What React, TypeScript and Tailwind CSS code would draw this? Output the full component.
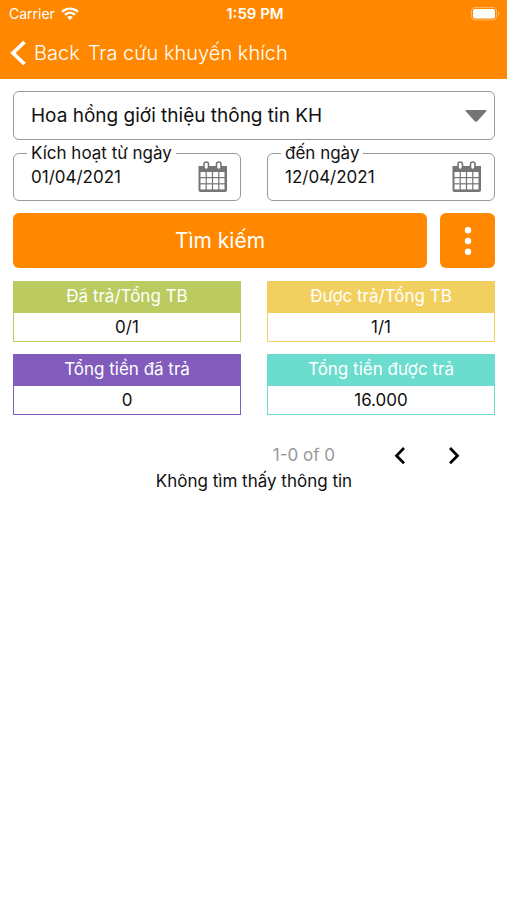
import React from "react";

const font = "font-['Inter','Liberation_Sans',sans-serif]";

const summary = [
  { title: "Đã trả/Tổng TB", value: "0/1", border: "border-[#bccb5f]", bg: "bg-[#bccb5f]" },
  { title: "Được trả/Tổng TB", value: "1/1", border: "border-[#f2d060]", bg: "bg-[#f2d060]" },
  { title: "Tổng tiền đã trả", value: "0", border: "border-[#815cbc]", bg: "bg-[#815cbc]" },
  { title: "Tổng tiền được trả", value: "16.000", border: "border-[#6bdccd]", bg: "bg-[#6bdccd]" },
];

const WifiIcon = () => (
  <svg viewBox="0 0 18 14" className="w-[18px] h-3.5" fill="#fff" aria-hidden="true">
    <path d="M9 0.4C5.6 0.4 2.5 1.7 0.2 3.9L1.9 5.7C3.8 3.9 6.3 2.8 9 2.8s5.2 1.1 7.1 2.9l1.7-1.8C15.5 1.7 12.4 0.4 9 0.4z" />
    <path d="M9 4.6c-2.2 0-4.3 0.9-5.8 2.4l1.8 1.8c1-1.1 2.5-1.7 4-1.7s3 0.6 4 1.7l1.8-1.8C13.3 5.5 11.2 4.6 9 4.6z" />
    <path d="M9 8.9c-1.1 0-2.1 0.5-2.8 1.2L9 13.2l2.8-3.1C11.1 9.4 10.1 8.9 9 8.9z" />
  </svg>
);

const BatteryIcon = () => (
  <svg viewBox="0 0 30 14" className="w-[30px] h-3.5" aria-hidden="true">
    <rect x="0.5" y="0.5" width="25" height="12.5" rx="3.5" fill="none" stroke="#fff" strokeOpacity="0.4" />
    <rect x="2" y="2" width="22" height="9.5" rx="2" fill="#fff" />
    <path d="M27 4.5c1.6 0.6 1.6 4 0 4.6z" fill="#fff" fillOpacity="0.45" />
  </svg>
);

const CalendarIcon = () => (
  <svg viewBox="0 0 30 32" className="w-[30px] h-8" aria-hidden="true">
    <path d="M0.5 5h28.500V29a2 2 0 0 1-2 2H2.500a2 2 0 0 1-2-2z" fill="#757575" />
    <g fill="#fff">
      {[11, 17.2, 23.4].map((y) =>
        [2.5, 8.8, 15.1, 21.4].map((x) => (
          <rect key={`${x}-${y}`} x={x} y={y} width="5.1" height="5" />
        ))
      )}
    </g>
    <rect x="6" y="1" width="4.5" height="7.5" rx="2.25" fill="#fff" stroke="#757575" strokeWidth="1.6" />
    <rect x="18.5" y="1" width="4.5" height="7.5" rx="2.25" fill="#fff" stroke="#757575" strokeWidth="1.6" />
  </svg>
);

const DateField = ({ id, label, date }: { id: string; label: string; date: string }) => (
  <fieldset className="min-w-0 border border-[#999] rounded-md pl-[13px] pr-3 pb-[7px]">
    <legend className="px-1 text-[17px] leading-4 whitespace-nowrap">
      <label htmlFor={id}>{label}</label>
    </legend>
    <div className="flex items-center h-8">
      <input
        id={id}
        type="text"
        defaultValue={date}
        className="flex-1 min-w-0 pl-1 text-[17px] leading-6 bg-transparent outline-none"
      />
      <button type="button" aria-label={label}>
        <CalendarIcon />
      </button>
    </div>
  </fieldset>
);

const App = () => {
  return (
    <div className={`min-h-screen bg-white text-[#111] ${font}`}>
      <header className="bg-[#ff8800] text-white">
        <div className="grid grid-cols-3 items-center h-7 pl-[9px] pr-1.5 text-sm">
          <div className="flex items-center gap-1.5">
            <span>Carrier</span>
            <WifiIcon />
          </div>
          <span className="text-center text-[15px] font-semibold">1:59 PM</span>
          <div className="flex justify-end">
            <BatteryIcon />
          </div>
        </div>
        <div className="flex items-center h-[51px] pl-2.5 pb-0.5 text-xl font-light">
          <button type="button" className="flex items-center gap-2">
            <svg viewBox="0 0 16 26" className="w-4 h-[26px]" fill="none" stroke="#fff" strokeWidth="3.8" aria-hidden="true">
              <path d="M14.5 2L3 13l11.5 11" />
            </svg>
            Back
          </button>
          <h1 className="ml-2 font-light">Tra cứu khuyến khích</h1>
        </div>
      </header>

      <main className="pl-[13px] pr-3 pt-3">
        <div className="relative">
          <select
            aria-label="Hoa hồng"
            className="appearance-none w-full h-[49px] pt-0.5 pl-[17px] pr-10 border border-[#999] rounded-md text-[19px] bg-white"
          >
            <option>Hoa hồng giới thiệu thông tin KH</option>
          </select>
          <svg viewBox="0 0 22 12" className="absolute right-2 top-[19px] w-[22px] h-3 pointer-events-none" fill="#757575" aria-hidden="true">
            <path d="M1.5 0h19c1 0 1.3 0.9 0.6 1.5L12 11.4c-0.6 0.6-1.4 0.6-2 0L0.9 1.5C0.2 0.9 0.5 0 1.5 0z" />
          </svg>
        </div>

        <div className="grid grid-cols-2 gap-[26px] mt-[5px]">
          <DateField id="from" label="Kích hoạt từ ngày" date="01/04/2021" />
          <DateField id="to" label="đến ngày" date="12/04/2021" />
        </div>

        <div className="flex gap-[13px] mt-3 text-white">
          <button type="button" className="flex-1 h-[55px] rounded-md bg-[#ff8800] text-[21px]">
            Tìm kiếm
          </button>
          <button type="button" aria-label="Menu" className="flex items-center justify-center w-[55px] h-[55px] rounded-md bg-[#ff8800]">
            <svg viewBox="0 0 8 28" className="w-2 h-7" fill="#fff" aria-hidden="true">
              <circle cx="4" cy="3.3" r="3.2" />
              <circle cx="4" cy="14" r="3.2" />
              <circle cx="4" cy="24.7" r="3.2" />
            </svg>
          </button>
        </div>

        <div className="grid grid-cols-2 gap-x-[26px] gap-y-3 mt-[13px] text-[17px] text-center">
          {summary.map((item) => (
            <div key={item.title} className={`border ${item.border}`}>
              <div className={`h-[31px] leading-7 text-white ${item.bg}`}>{item.title}</div>
              <div className="h-7 leading-7">{item.value}</div>
            </div>
          ))}
        </div>

        <div className="flex items-center justify-end h-7 mt-[26px] pr-[27px]">
          <span className="mr-[51px] text-[17px] leading-6 text-[#999]">1-0 of 0</span>
          <button type="button" aria-label="Previous" className="flex justify-center w-7 mr-[26px]">
            <svg viewBox="0 0 12 18" className="w-3 h-[18px]" fill="none" stroke="#000" strokeWidth="2.7" aria-hidden="true">
              <path d="M10 2L2.500 9.800l7.500 7.500" />
            </svg>
          </button>
          <button type="button" aria-label="Next" className="flex justify-center w-7">
            <svg viewBox="0 0 12 18" className="w-3 h-[18px]" fill="none" stroke="#000" strokeWidth="2.7" aria-hidden="true">
              <path d="M2 2L9.500 9.800L2 17.300" />
            </svg>
          </button>
        </div>
        <p className="text-[17px] leading-6 text-center">Không tìm thấy thông tin</p>
      </main>
    </div>
  );
};

export default App;
